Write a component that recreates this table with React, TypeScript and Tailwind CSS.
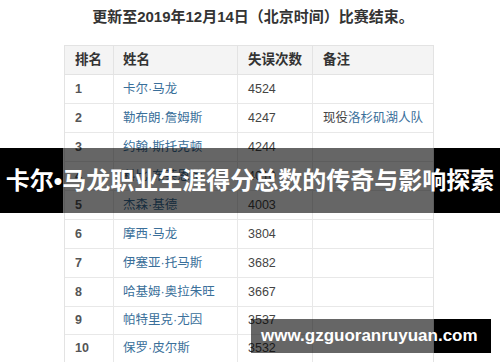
import React from "react";

const rows: { rank: string; name: string; num: string; note?: React.ReactNode; h: string }[] = [
  { rank: "1", name: "卡尔·马龙", num: "4524", h: "h-[29px]" },
  { rank: "2", name: "勒布朗·詹姆斯", num: "4247", h: "h-[29px]", note: (<><span className="text-[#444]">现役</span><span className="text-[#3a6f9a]">洛杉矶湖人队</span></>) },
  { rank: "3", name: "约翰·斯托克顿", num: "4244", h: "h-[29px]" },
  { rank: "4", name: "科比·布莱恩特", num: "4010", h: "h-[29px]" },
  { rank: "5", name: "杰森·基德", num: "4003", h: "h-[29px]" },
  { rank: "6", name: "摩西·马龙", num: "3804", h: "h-[29px]" },
  { rank: "7", name: "伊塞亚·托马斯", num: "3682", h: "h-[29px]" },
  { rank: "8", name: "哈基姆·奥拉朱旺", num: "3667", h: "h-[29px]" },
  { rank: "9", name: "帕特里克·尤因", num: "3537", h: "h-[28px]" },
  { rank: "10", name: "保罗·皮尔斯", num: "3532", h: "h-[28px]" },
];

const ff = { fontFamily: '"Liberation Sans", "Noto Sans CJK SC", sans-serif' };

export default function App() {
  return (
    <div className="relative w-[500px] h-[362px] overflow-hidden bg-white" style={ff}>
      <div className="h-[35px] flex items-center justify-center pl-[6px] text-[15px] font-bold text-[#333]">
        更新至2019年12月14日（北京时间）比赛结束。
      </div>
      <div className="mt-[10px] ml-[64px] w-[370px] border-l border-r border-t border-[#e3e3e3]">
        <div className="flex h-[29px] bg-[#f4f4f4] border-b border-[#e3e3e3] text-[13.5px] font-bold text-[#333]">
          <div className="w-[49px] flex items-center pl-[10px] border-r border-[#e3e3e3]">排名</div>
          <div className="w-[124px] flex items-center pl-[9px] border-r border-[#e3e3e3]">姓名</div>
          <div className="w-[75px] flex items-center pl-[10px] border-r border-[#e3e3e3]">失误次数</div>
          <div className="flex-1 flex items-center pl-[10px]">备注</div>
        </div>
        {rows.map((r) => (
          <div key={r.rank} className={`flex ${r.h} border-b border-[#e8e8e8] text-[12.5px]`}>
            <div className="w-[49px] flex items-center pl-[10px] border-r border-[#e8e8e8] font-bold text-[#555]">{r.rank}</div>
            <div className="w-[124px] flex items-center pl-[9px] border-r border-[#e8e8e8] text-[#3a6f9a]">{r.name}</div>
            <div className="w-[75px] flex items-center pl-[10px] border-r border-[#e8e8e8] text-[#444]">{r.num}</div>
            <div className="flex-1 flex items-center pl-[10px]">{r.note}</div>
          </div>
        ))}
      </div>

      <div className="absolute left-0 top-[148px] w-[500px] h-[65px] flex">
        <div className="w-[63px] h-full bg-black" />
        <div className="w-[371px] h-full bg-black/60" />
        <div className="flex-1 h-full bg-black" />
        <div className="absolute inset-0 flex items-center justify-center text-white text-[24px] font-bold whitespace-nowrap">
          卡尔•马龙职业生涯得分总数的传奇与影响探索
        </div>
      </div>

      <div className="absolute left-[251px] top-[319px] w-[240px] h-[34px] flex">
        <div className="w-[183px] h-full bg-black/60" />
        <div className="flex-1 h-full bg-black" />
        <div className="absolute inset-0 flex items-center pl-[10px] text-white text-[17px] font-bold whitespace-nowrap">
          www.gzguoranruyuan.com
        </div>
      </div>
    </div>
  );
}
